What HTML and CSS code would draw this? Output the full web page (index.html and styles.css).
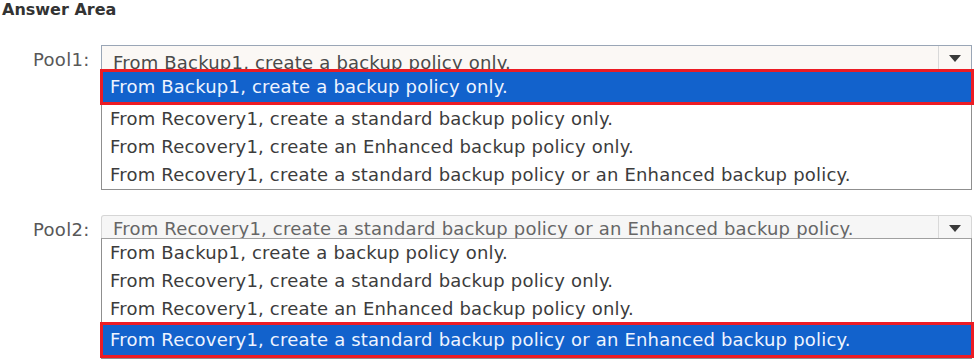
FILE: index.html
```html
<!DOCTYPE html>
<html>
<head>
    <meta charset="utf-8">
    <title>Answer Area</title>
    <link rel="stylesheet" href="styles.css">
</head>
<body>
    <div class="main">
        <h2 class="title">Answer Area</h2>

        <div class="pool pool1">
            <span class="label">Pool1:</span>
            <div class="dropdown">
                <div class="select">
                    <span class="value">From Backup1, create a backup policy only.</span>
                    <span class="arrow"></span>
                </div>
                <ul class="list">
                    <li class="sel">From Backup1, create a backup policy only.</li>
                    <li>From Recovery1, create a standard backup policy only.</li>
                    <li>From Recovery1, create an Enhanced backup policy only.</li>
                    <li>From Recovery1, create a standard backup policy or an Enhanced backup policy.</li>
                </ul>
            </div>
        </div>

        <div class="pool pool2">
            <span class="label">Pool2:</span>
            <div class="dropdown">
                <div class="select">
                    <span class="value">From Recovery1, create a standard backup policy or an Enhanced backup policy.</span>
                    <span class="arrow"></span>
                </div>
                <ul class="list">
                    <li>From Backup1, create a backup policy only.</li>
                    <li>From Recovery1, create a standard backup policy only.</li>
                    <li>From Recovery1, create an Enhanced backup policy only.</li>
                    <li class="sel">From Recovery1, create a standard backup policy or an Enhanced backup policy.</li>
                </ul>
            </div>
        </div>
    </div>
</body>
</html>
```

FILE: styles.css
```css
html, body {
    font-family: "DejaVu Sans", "Noto Sans", sans-serif;
    background: #ffffff;
    color: #3c3c3c;
}
body {
    margin: 0;
    padding: 0;
}

.main {
    width: 974px;
    height: 361px;
    overflow: hidden;
}

.title {
    margin: 0;
    padding: 1px 0 0 2px;
    height: 22px;
    box-sizing: border-box;
    font-size: 16px;
    font-weight: 600;
    line-height: 18px;
    color: #333;
}

.pool {
    display: flex;
    align-items: flex-start;
}
.pool1 {
    margin-top: 23px;
}
.pool2 {
    margin-top: 25px;
}

.label {
    width: 101px;
    box-sizing: border-box;
    padding: 3px 0 0 33px;
    font-size: 18px;
    letter-spacing: 0.3px;
    line-height: 24px;
    color: #585858;
}

.dropdown {
    width: 871px;
}

.select {
    display: flex;
    height: 24px;
    box-sizing: border-box;
    border: 1px solid #9aa6b6;
    border-bottom: none;
    background: #fbf8f5;
    overflow: hidden;
}
.pool2 .select {
    height: 23px;
    border-color: #d6d6d6;
    background: #f6f6f6;
    border-radius: 3px 3px 0 0;
}

.value {
    flex: 1;
    padding: 6px 0 0 11px;
    font-size: 18px;
    letter-spacing: 0.2px;
    line-height: 22px;
    white-space: nowrap;
    color: #4a4a4a;
}
.pool2 .value {
    padding-top: 2px;
    color: #666;
}

.arrow {
    width: 33px;
    border-left: 1px solid #d9d9d9;
    display: flex;
    justify-content: center;
    padding-top: 9px;
    box-sizing: border-box;
}
.arrow::before {
    content: "";
    border-left: 6px solid transparent;
    border-right: 6px solid transparent;
    border-top: 7px solid #3a3a3a;
    height: 0;
}

.list {
    list-style: none;
    margin: 0;
    padding: 0;
    border: 1px solid #8f8f8f;
    border-top-color: #a0a0a0;
    background: #fff;
}

.list li {
    height: 28px;
    padding-left: 8px;
    font-size: 18px;
    letter-spacing: 0.2px;
    line-height: 28px;
    white-space: nowrap;
    color: #3c3c3c;
}

.list li.sel {
    height: 30px;
    line-height: 30px;
    margin: -1px -3px 0 -2px;
    padding-left: 7px;
    border: 3px solid #ec1c24;
    background: #1262cc;
    color: #eef4ff;
}
```
